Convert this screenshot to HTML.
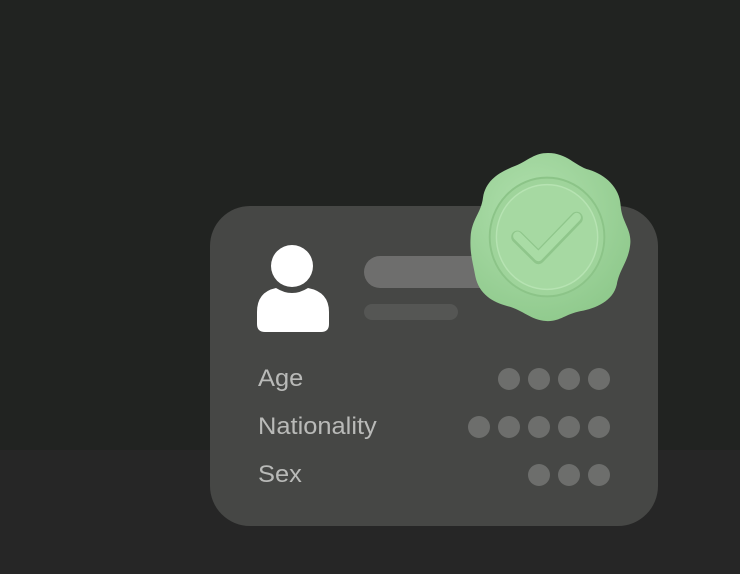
<!DOCTYPE html>
<html><head><style>
html,body{margin:0;padding:0;}
body{width:740px;height:574px;position:relative;overflow:hidden;background:#212321;font-family:"Liberation Sans",sans-serif;}
.bot{position:absolute;left:0;top:450px;width:740px;height:124px;background:#262626;}
.card{position:absolute;left:210px;top:206px;width:448px;height:320px;border-radius:40px;background:#464745;}
.t{position:absolute;left:258px;color:#b9bab8;font-size:24px;transform:scaleX(1.06);transform-origin:left;}
.d{position:absolute;width:22px;height:22px;border-radius:50%;background:#6d6e6c;}
.bar{position:absolute;background:#6e6e6d;}
</style></head><body>
<div class="bot"></div>
<div class="card"></div>
<svg style="position:absolute;left:0;top:0" width="740" height="574">
<circle cx="292" cy="266" r="21" fill="#fff"/>
<path d="M257 312 Q257 292 276 288 Q292 298 308 288 Q329 292 329 312 L329 324 Q329 332 321 332 L265 332 Q257 332 257 324Z" fill="#fff"/>
</svg>
<div class="bar" style="left:364px;top:256px;width:140px;height:32px;border-radius:16px;"></div>
<div class="bar" style="left:364px;top:304px;width:94px;height:16px;border-radius:8px;background:#555654"></div>
<div class="t" style="top:365px">Age</div>
<div class="t" style="top:413px">Nationality</div>
<div class="t" style="top:461px">Sex</div>
<div class="d" style="left:498px;top:368px"></div><div class="d" style="left:528px;top:368px"></div><div class="d" style="left:558px;top:368px"></div><div class="d" style="left:588px;top:368px"></div>
<div class="d" style="left:468px;top:416px"></div><div class="d" style="left:498px;top:416px"></div><div class="d" style="left:528px;top:416px"></div><div class="d" style="left:558px;top:416px"></div><div class="d" style="left:588px;top:416px"></div>
<div class="d" style="left:528px;top:464px"></div><div class="d" style="left:558px;top:464px"></div><div class="d" style="left:588px;top:464px"></div>
<svg style="position:absolute;left:462px;top:148px" width="172" height="178" viewBox="0 0 180 180" preserveAspectRatio="none">
<defs><radialGradient id="g" cx="0.4" cy="0.35" r="0.7"><stop offset="0" stop-color="#b0e0ad"/><stop offset="1" stop-color="#8fc98c"/></radialGradient></defs>
<path d="M90 5 C110 5 118 18 133 22 C150 27 165 40 166 58 C167 75 178 82 176 98 C174 115 165 122 162 138 C158 155 140 162 124 165 C108 168 102 176 88 175 C72 174 64 164 48 160 C32 156 18 148 14 130 C11 114 8 106 9 90 C10 72 20 66 22 50 C25 32 40 24 56 18 C70 12 76 5 90 5Z" fill="url(#g)"/>
<circle cx="89" cy="90" r="60" fill="#9fd49b" stroke="#8cc488" stroke-width="2"/>
<circle cx="89" cy="90" r="53" fill="#a6d9a2" stroke="#b6e3b2" stroke-width="1.5"/>
<path d="M58 90 L80 111 L120 71" fill="none" stroke="#8fc68b" stroke-width="13" stroke-linecap="round" stroke-linejoin="round"/>
<path d="M58 89 L80 110 L120 70" fill="none" stroke="#a9dca5" stroke-width="9" stroke-linecap="round" stroke-linejoin="round"/>
</svg>
</body></html>
